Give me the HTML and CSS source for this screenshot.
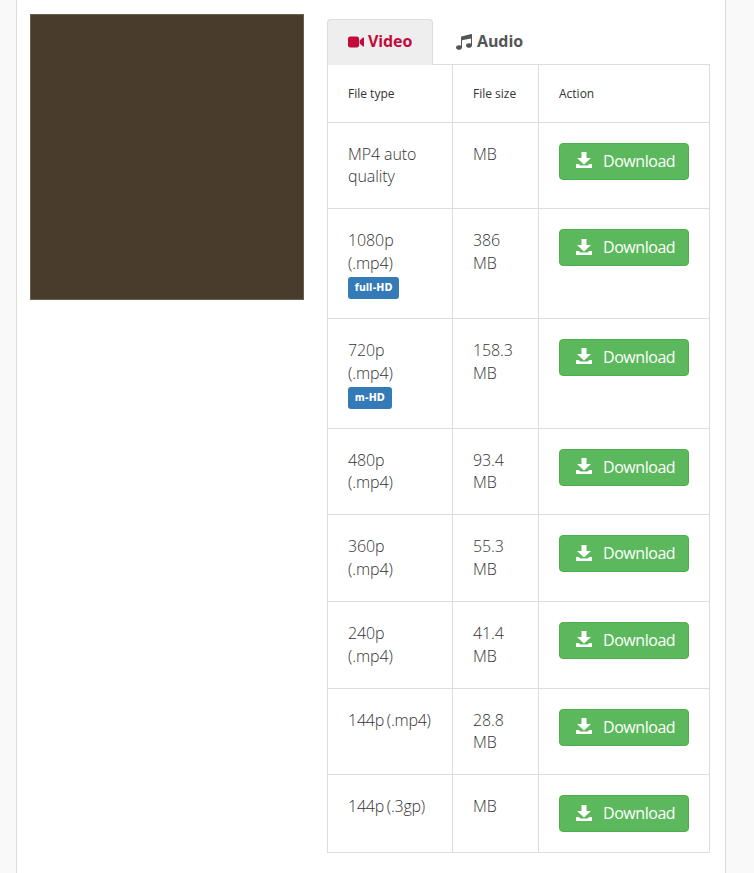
FILE: index.html
```html
<!DOCTYPE html>
<html lang="en">
<head>
  <meta charset="UTF-8">
  <meta name="viewport" content="width=device-width, initial-scale=1.0">
  <title>Video download</title>
  <link rel="stylesheet" href="styles.css">
</head>
<body>
  <section class="panel">
    <div class="thumb"></div>
    <div class="results">
      <ul class="tabs">
        <li class="tab tab-active">
          <svg class="tab-icon" viewBox="0 0 16 12" width="16" height="12"><rect x="0" y="0.5" width="11" height="11" rx="2.2"/><path d="M11.6 4.6 15 1.6c.4-.3 1-.1 1 .5v7.800c0 .6-.6.8-1 .5L11.600 7.400z"/></svg>
          Video
        </li>
        <li class="tab tab-audio">
          <svg class="tab-icon" viewBox="0 0 16 16" width="16" height="16"><path d="M16 .8V11.500c0 1.500-1.700 2.300-3 2.300s-3-.8-3-2.300 1.700-2.300 3-2.300c.7 0 1.400.1 2 .5V4.400L6 6.200v7.300C6 15 4.300 15.800 3 15.800S0 15 0 13.500s1.700-2.300 3-2.300c.7 0 1.400.1 2 .5V3.200c0-.3.2-.6.500-.7L15.200 0c.4-.1.800.2.800.8z"/></svg>
          Audio
        </li>
      </ul>
      <table class="formats">
        <thead>
          <tr><th class="col-type">File type</th><th class="col-size">File size</th><th>Action</th></tr>
        </thead>
        <tbody>
          <tr>
            <td>MP4 auto quality</td><td>MB</td>
            <td><a class="btn"><svg class="btn-icon" viewBox="0 0 16 16" width="16" height="16"><path d="M5.500 0h5v6H15L8 12.500 1 6h4.500zM0 12h2.500l2 1.500h7l2-1.500H16v4H0z"/></svg>Download</a></td>
          </tr>
          <tr>
            <td>1080p (.mp4)<br><span class="label">full-HD</span></td><td>386 MB</td>
            <td><a class="btn"><svg class="btn-icon" viewBox="0 0 16 16" width="16" height="16"><path d="M5.500 0h5v6H15L8 12.500 1 6h4.500zM0 12h2.500l2 1.500h7l2-1.500H16v4H0z"/></svg>Download</a></td>
          </tr>
          <tr>
            <td>720p (.mp4)<br><span class="label">m-HD</span></td><td>158.3 MB</td>
            <td><a class="btn"><svg class="btn-icon" viewBox="0 0 16 16" width="16" height="16"><path d="M5.500 0h5v6H15L8 12.500 1 6h4.500zM0 12h2.500l2 1.500h7l2-1.500H16v4H0z"/></svg>Download</a></td>
          </tr>
          <tr>
            <td>480p (.mp4)</td><td>93.4 MB</td>
            <td><a class="btn"><svg class="btn-icon" viewBox="0 0 16 16" width="16" height="16"><path d="M5.500 0h5v6H15L8 12.500 1 6h4.500zM0 12h2.500l2 1.500h7l2-1.500H16v4H0z"/></svg>Download</a></td>
          </tr>
          <tr>
            <td>360p (.mp4)</td><td>55.3 MB</td>
            <td><a class="btn"><svg class="btn-icon" viewBox="0 0 16 16" width="16" height="16"><path d="M5.500 0h5v6H15L8 12.500 1 6h4.500zM0 12h2.500l2 1.500h7l2-1.500H16v4H0z"/></svg>Download</a></td>
          </tr>
          <tr>
            <td>240p (.mp4)</td><td>41.4 MB</td>
            <td><a class="btn"><svg class="btn-icon" viewBox="0 0 16 16" width="16" height="16"><path d="M5.500 0h5v6H15L8 12.500 1 6h4.500zM0 12h2.500l2 1.500h7l2-1.500H16v4H0z"/></svg>Download</a></td>
          </tr>
          <tr>
            <td class="one-line">144p (.mp4)</td><td>28.8 MB</td>
            <td><a class="btn"><svg class="btn-icon" viewBox="0 0 16 16" width="16" height="16"><path d="M5.500 0h5v6H15L8 12.500 1 6h4.500zM0 12h2.500l2 1.500h7l2-1.500H16v4H0z"/></svg>Download</a></td>
          </tr>
          <tr>
            <td class="one-line">144p (.3gp)</td><td>MB</td>
            <td><a class="btn"><svg class="btn-icon" viewBox="0 0 16 16" width="16" height="16"><path d="M5.500 0h5v6H15L8 12.500 1 6h4.500zM0 12h2.500l2 1.500h7l2-1.500H16v4H0z"/></svg>Download</a></td>
          </tr>
        </tbody>
      </table>
    </div>
  </section>
</body>
</html>
```

FILE: styles.css
```css
* {
  box-sizing: border-box;
}
body {
  margin: 0;
  background: #f9f9f9;
  font-family: "Open Sans", "Noto Sans", sans-serif;
  font-weight: 300;
  font-size: 16px;
  line-height: 1.42857;
  color: #333;
}
.panel {
  display: flex;
  align-items: flex-start;
  width: 710px;
  margin-left: 16px;
  padding: 14px 15px 20px 13px;
  background: #fff;
  border-left: 1px solid #ddd;
  border-right: 1px solid #ddd;
}
.thumb {
  flex: none;
  width: 274px;
  height: 286px;
  background: #4a3c2d;
  border: 1px solid #6b5f50;
}
.results {
  flex: none;
  width: 383px;
  margin-left: 23px;
  padding-top: 5px;
}
.tabs {
  display: flex;
  gap: 2px;
  margin: 0;
  padding: 0;
  list-style: none;
}
.tab {
  display: flex;
  align-items: center;
  gap: 4px;
  height: 46px;
  margin-bottom: -1px;
  padding: 0 20px 2px;
  border: 1px solid transparent;
  border-bottom: 0;
  border-radius: 4px 4px 0 0;
  font-size: 16px;
  font-weight: 700;
  letter-spacing: -0.1px;
  color: #555;
}
.tab-active {
  width: 106px;
  background: #eee;
  border-color: #ddd;
  color: #c40a3c;
}
.tab-audio {
  gap: 5px;
}
.tab-icon {
  flex: none;
  fill: currentColor;
}
.formats {
  width: 100%;
  border-collapse: collapse;
  table-layout: fixed;
}
.formats th,
.formats td {
  padding: 20px;
  border: 1px solid #ddd;
  text-align: left;
  vertical-align: top;
  font-weight: 300;
  letter-spacing: -0.1px;
}
.formats th {
  padding: 21px 20px 19px;
  font-size: 12px;
  font-weight: 400;
  line-height: 16.5px;
  letter-spacing: 0;
}
.formats .one-line {
  padding-right: 0;
  white-space: nowrap;
  letter-spacing: -0.25px;
  word-spacing: -1px;
}
.col-type {
  width: 125px;
}
.col-size {
  width: 86px;
}
.label {
  display: inline-block;
  margin: 2px 0 -1px;
  padding: 0 6.8px;
  height: 22px;
  background: #337ab7;
  border-radius: 3px;
  font-family: "DejaVu Sans", sans-serif;
  font-size: 9.6px;
  font-weight: 700;
  line-height: 22px;
  letter-spacing: 0;
  color: #fff;
  vertical-align: top;
}
.btn {
  display: flex;
  align-items: center;
  gap: 11px;
  width: 130px;
  height: 37px;
  padding-left: 16px;
  background: #5cb85c;
  border: 1px solid #4cae4c;
  border-radius: 4px;
  color: #fff;
  font-weight: 400;
  letter-spacing: -0.45px;
}
.btn-icon {
  flex: none;
  margin-top: -2px;
  fill: #fff;
}
```
